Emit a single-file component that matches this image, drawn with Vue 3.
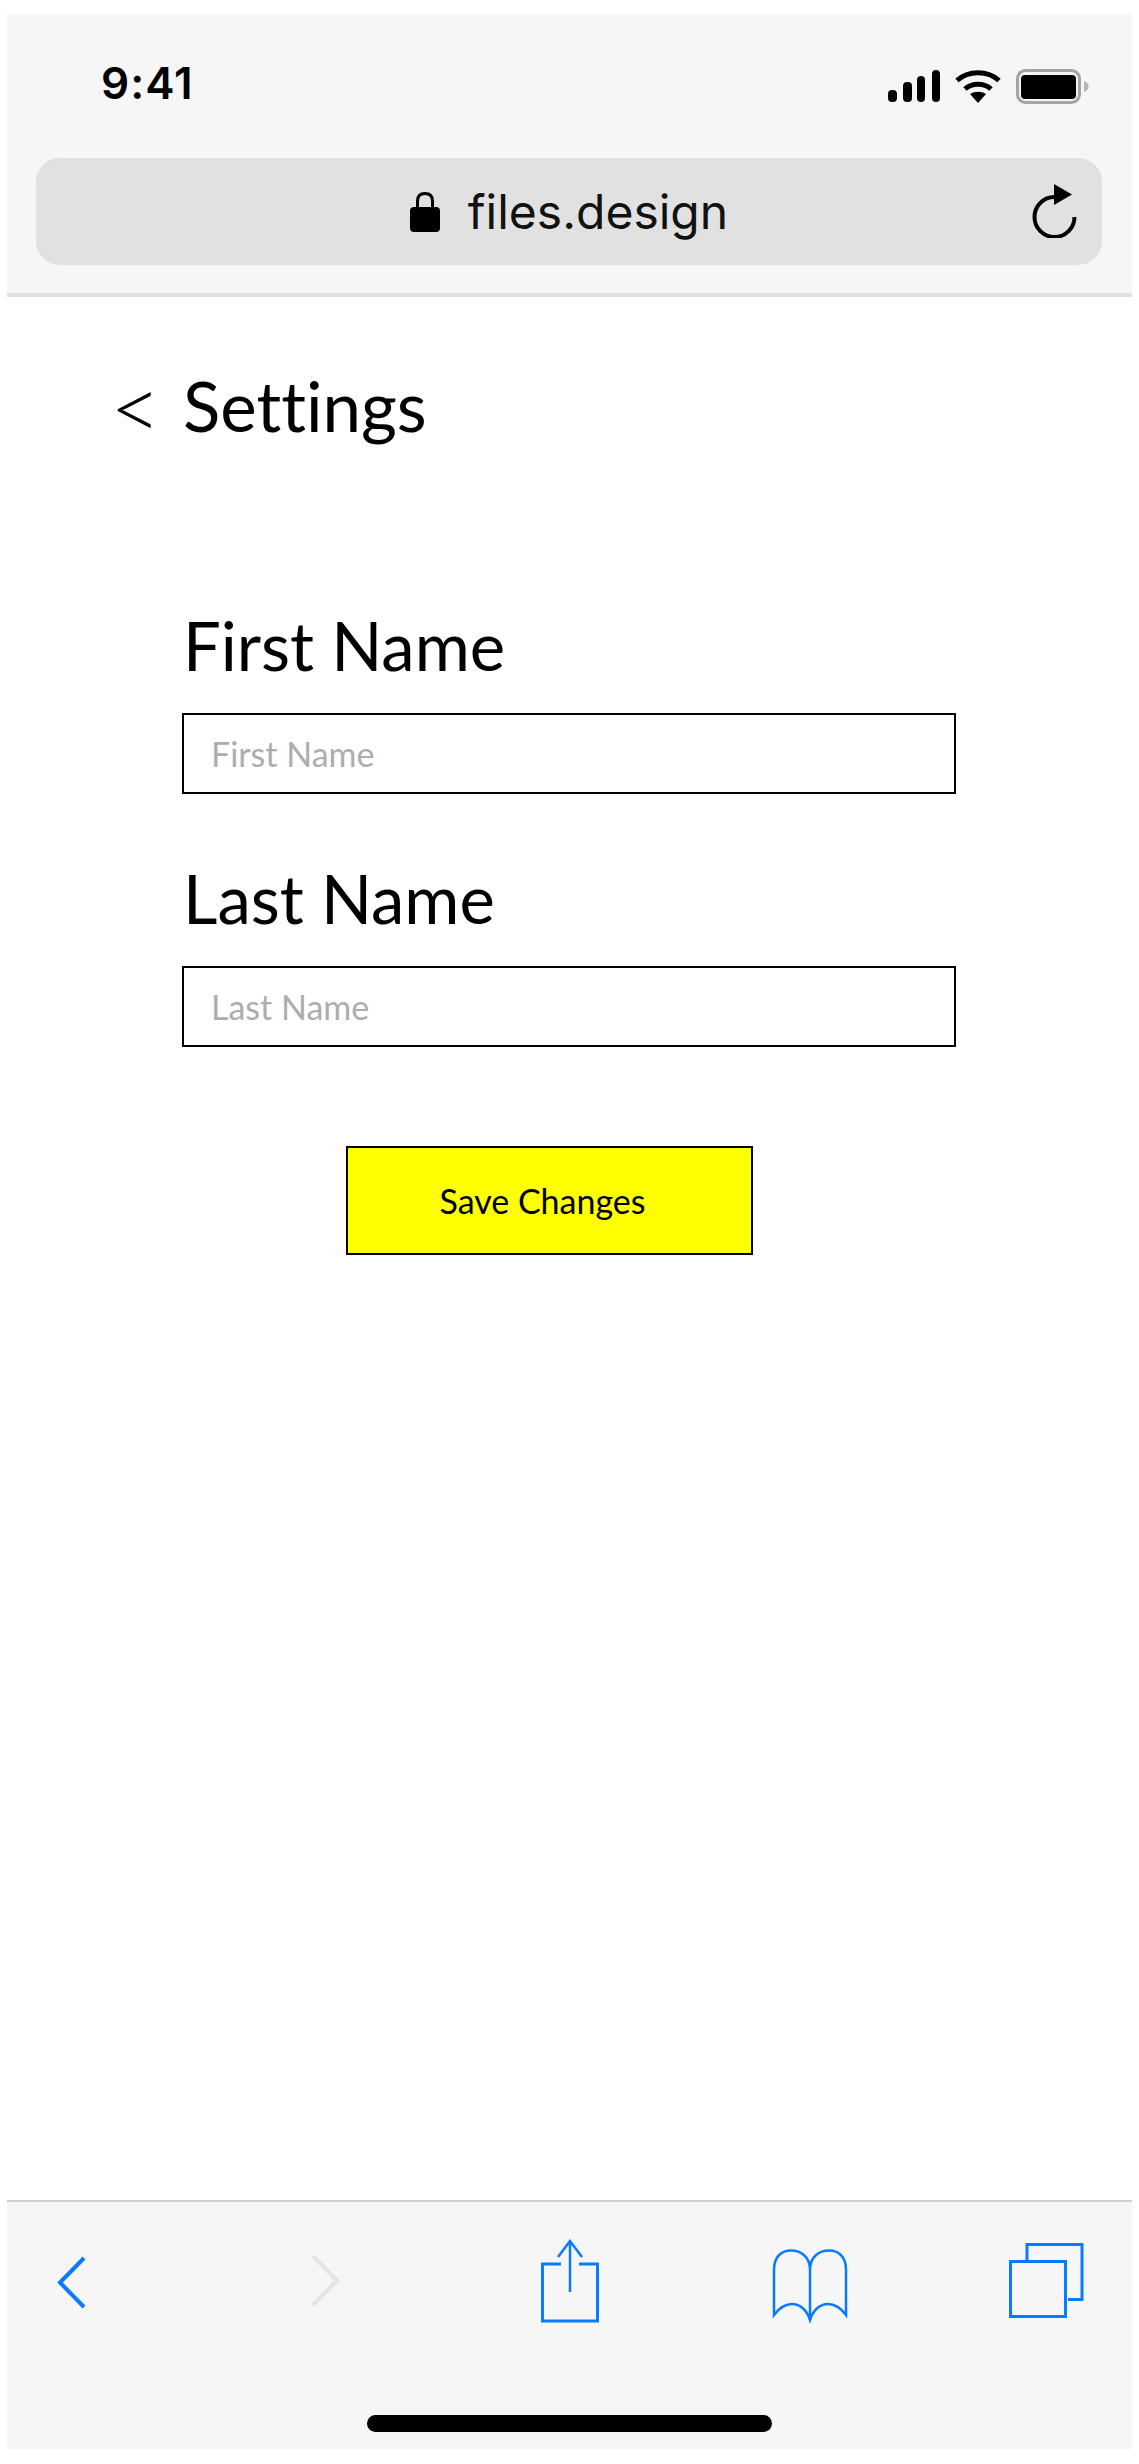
<template>
  <div class="frame">
    <header class="browser-top">
      <div class="status">
        <span class="time">9:41</span>
        <div class="status-icons">
          <svg class="signal" width="52" height="32" viewBox="0 0 52 32">
            <rect x="0" y="20" width="9" height="12" rx="4" />
            <rect x="15" y="12" width="9" height="20" rx="4" />
            <rect x="29" y="6" width="8" height="26" rx="4" />
            <rect x="44" y="0" width="8" height="32" rx="4" />
          </svg>
          <svg class="wifi" width="46" height="34" viewBox="0 0 46 34">
            <path d="M2 11.5C13 1 33 1 44 11.5" fill="none" stroke="#000" stroke-width="5" />
            <path d="M10 20C17 13.5 29 13.5 36 20" fill="none" stroke="#000" stroke-width="5" />
            <path d="M15 25C20 22 26 22 31 25L23 34Z" />
          </svg>
          <svg class="battery" width="73" height="35" viewBox="0 0 73 35">
            <rect x="1.5" y="1.5" width="62" height="32" rx="8" fill="none" stroke="#a4a4a4" stroke-width="3" />
            <rect x="5" y="6" width="55" height="24" rx="4" />
            <path d="M68 12C71 13 72.500 15 72.500 17.500C72.500 20 71 22 68 23Z" fill="#b5b5b5" />
          </svg>
        </div>
      </div>
      <div class="address-bar">
        <svg class="lock" width="30" height="40" viewBox="0 0 30 40">
          <path d="M7.500 17V9C7.500 4 10.500 1.500 15 1.500C19.500 1.500 22.500 4 22.500 9V17" fill="none" stroke="#000" stroke-width="3" />
          <rect x="0" y="15" width="30" height="25" rx="4" />
        </svg>
        <span class="url">files.design</span>
        <svg class="reload" width="46" height="54" viewBox="0 0 46 54">
          <path d="M42.500 33A20 20 0 1 1 22.500 13" fill="none" stroke="#000" stroke-width="4" />
          <path d="M22 0L40 10.500L22 21Z" />
        </svg>
      </div>
    </header>

    <main class="page">
      <div class="page-title">
        <span class="back-mark">&lt;</span>
        <h1>Settings</h1>
      </div>

      <form class="settings-form" @submit.prevent>
        <label v-for="field in fields" :key="field" class="field">
          <span class="field-label">{{ field }}</span>
          <input type="text" :placeholder="field" />
        </label>
        <button class="save-btn" type="submit">Save Changes</button>
      </form>
    </main>

    <footer class="browser-bottom">
      <div class="toolbar">
        <svg class="tb-back" width="30" height="90" viewBox="0 0 30 90">
          <path d="M27 22L3 46.500L27 71" fill="none" stroke="#0a7aff" stroke-width="4" />
        </svg>
        <svg class="tb-forward" width="30" height="90" viewBox="0 0 30 90">
          <path d="M3 20L27 44.500L3 69" fill="none" stroke="#e4e4e4" stroke-width="4" />
        </svg>
        <svg class="tb-share" width="58" height="90" viewBox="0 0 58 90">
          <path d="M20 28H1.500V85H56.500V28H38" fill="none" stroke="#0a7aff" stroke-width="3" />
          <path d="M29 5V56M17 21L29 5L41 21" fill="none" stroke="#0a7aff" stroke-width="2.500" />
        </svg>
        <svg class="tb-book" width="76" height="90" viewBox="0 0 76 90">
          <path d="M2 79V34C2 20 10 14.500 19 14.500C28 14.500 38 20 38 34C38 20 48 14.500 57 14.500C66 14.500 74 20 74 34V79C68 71 62 68 56 68C48 68 41 74 38 84C35 74 28 68 20 68C14 68 8 71 2 79Z" fill="none" stroke="#0a7aff" stroke-width="2.500" />
          <path d="M38 34V84" fill="none" stroke="#0a7aff" stroke-width="2.500" />
        </svg>
        <svg class="tb-tabs" width="75" height="90" viewBox="0 0 75 90">
          <path d="M18 24V8.500H73V63.500H59" fill="none" stroke="#0a7aff" stroke-width="3" />
          <rect x="1.500" y="25.500" width="55" height="55" fill="none" stroke="#0a7aff" stroke-width="3" />
        </svg>
      </div>
      <div class="home-indicator"></div>
    </footer>
  </div>
</template>

<script setup>
const fields = ['First Name', 'Last Name']
</script>

<style scoped>
.frame {
  display: flex;
  flex-direction: column;
  width: 1125px;
  height: 2435px;
  margin: 14px 0 15px 7px;
  background: #fff;
  color: #000;
  font-family: Lato, "Liberation Sans", sans-serif;
  font-variant-ligatures: none;
}

.browser-top {
  height: 283px;
  box-sizing: border-box;
  padding: 0 30px 0 29px;
  background: #f6f6f6;
  border-bottom: 4px solid #e0e0e0;
}

.status {
  display: flex;
  align-items: center;
  justify-content: space-between;
  height: 144px;
  padding: 0 0 0 65px;
}

.time {
  margin-top: -6px;
  font-family: Inter, "Liberation Sans", sans-serif;
  font-size: 44px;
  font-weight: 600;
  letter-spacing: 1px;
}

.status-icons {
  display: flex;
  align-items: center;
  gap: 15px;
  padding-right: 13px;
}

.signal,
.lock,
.reload {
  fill: #000;
}

.address-bar {
  position: relative;
  display: flex;
  align-items: center;
  justify-content: center;
  gap: 28px;
  height: 107px;
  background: #e1e1e1;
  border-radius: 24px;
}

.url {
  font-family: Inter, "Liberation Sans", sans-serif;
  font-size: 48px;
  color: #111;
}

.reload {
  position: absolute;
  right: 24px;
  top: 26px;
}

.page {
  flex: 1;
}

.page-title {
  display: flex;
  align-items: center;
  height: 90px;
  margin-top: 64px;
  padding-left: 103px;
}

.back-mark {
  width: 73px;
  font-size: 88px;
  line-height: 90px;
  font-weight: 300;
}

.page-title h1 {
  margin: 0;
  font-size: 69px;
  line-height: 90px;
  font-weight: 400;
}

.settings-form {
  display: flex;
  flex-direction: column;
  padding: 149px 0 0 175px;
}

.field {
  display: flex;
  flex-direction: column;
  width: 774px;
  margin-bottom: 59px;
}

.field-label {
  font-size: 67px;
  line-height: 90px;
  padding-left: 1px;
  margin-bottom: 23px;
}

.field input {
  box-sizing: border-box;
  height: 81px;
  padding: 0 0 0 27px;
  border: 2px solid #000;
  border-radius: 0;
  background: #fff;
  font-family: inherit;
  font-size: 34px;
  outline: none;
}

.field input::placeholder {
  color: #adadad;
  opacity: 1;
}

.save-btn {
  align-self: flex-start;
  box-sizing: border-box;
  width: 407px;
  height: 109px;
  margin: 40px 0 0 164px;
  padding: 0 14px 0 0;
  background: #ffff00;
  border: 2px solid #000;
  border-radius: 0;
  color: #000;
  font-family: inherit;
  font-size: 34px;
}

.browser-bottom {
  box-sizing: border-box;
  height: 249px;
  background: #f6f6f6;
  border-top: 2px solid #d2d2d2;
  padding-top: 34px;
}

.toolbar {
  display: flex;
  height: 90px;
}

.tb-back {
  margin-left: 50px;
}

.tb-forward {
  margin-left: 223px;
}

.tb-share {
  margin-left: 201px;
}

.tb-book {
  margin-left: 173px;
}

.tb-tabs {
  margin-left: 161px;
}

.home-indicator {
  width: 405px;
  height: 17px;
  margin: 89px auto 0;
  background: #000;
  border-radius: 9px;
}
</style>

<style>
html,
body {
  margin: 0;
  background: #fff;
}
</style>
